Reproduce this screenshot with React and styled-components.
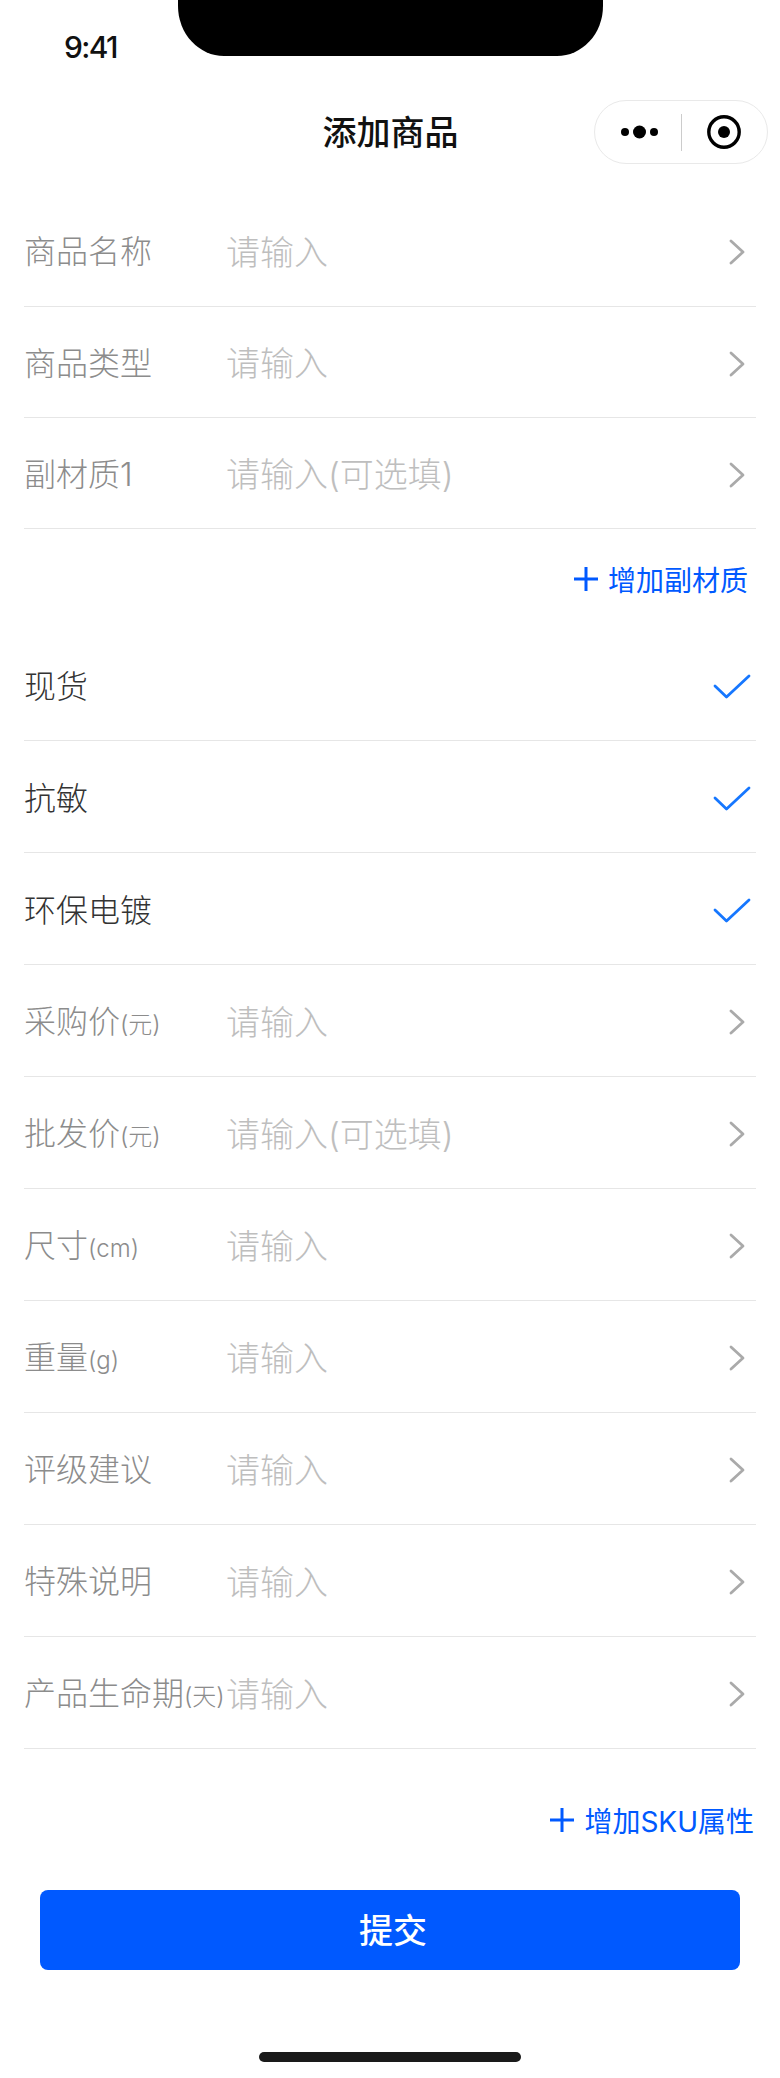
import styled, { createGlobalStyle } from "styled-components";

const GlobalStyle = createGlobalStyle`
  html, body {
    margin: 0;
    padding: 0;
    background: #fff;
  }
  body {
    font-family: "Inter", "Noto Sans CJK SC", sans-serif;
  }
`;

const Screen = styled("div")`
  position: relative;
  width: 780px;
  height: 2078px;
  overflow: hidden;
  background: #fff;
`;

const Notch = styled("div")`
  position: absolute;
  top: 0;
  left: 178px;
  width: 425px;
  height: 56px;
  background: #000;
  border-radius: 0 0 46px 46px / 0 0 50px 50px;
`;

const StatusBar = styled("div")`
  height: 100px;
  padding: 28px 0 0 64px;
  box-sizing: border-box;
  font-size: 30px;
  line-height: 38px;
  font-weight: 500;
  letter-spacing: -1.6px;
  color: #111;
`;

const NavBar = styled("div")`
  display: grid;
  grid-template-columns: 1fr auto 1fr;
  align-items: center;
  height: 64px;
  padding: 0 12px;
`;

const Title = styled("div")`
  grid-column: 2;
  margin: -3px 0 0 1px;
  font-family: "Noto Sans CJK SC", sans-serif;
  font-size: 34px;
  font-weight: 500;
  color: #111;
`;

const Capsule = styled("div")`
  justify-self: end;
  display: flex;
  align-items: center;
  box-sizing: border-box;
  width: 174px;
  height: 64px;
  padding-left: 26px;
  border: 1px solid #e9e9e9;
  border-radius: 32px;
`;

const CapsuleDivider = styled("span")`
  width: 1px;
  height: 37px;
  margin: 0 25px 0 23px;
  background: #ccc;
`;

const List = styled("div")`
  margin-top: 31px;
`;

const Row = styled("div")`
  display: flex;
  align-items: center;
  box-sizing: border-box;
  height: ${(props) => props.$height || 112}px;
  margin: 0 24px;
  border-bottom: 1px solid #e6e6e6;
`;

const Label = styled("div")`
  flex: none;
  width: 202px;
  margin-top: -3px;
  white-space: nowrap;
  font-size: 32px;
  font-weight: 300;
  color: #8c8c8c;
`;

const Unit = styled("span")`
  font-size: 24px;
`;

const Placeholder = styled("div")`
  flex: 1;
  margin-top: -1px;
  font-size: 34px;
  font-weight: 300;
  color: #bebebe;
`;

const CheckLabel = styled("div")`
  flex: 1;
  margin-top: -1px;
  font-size: 32px;
  font-weight: 300;
  color: #333;
`;

const ChevronIcon = styled("svg")`
  flex: none;
  width: 16px;
  height: 26px;
  margin: 3px 11px 0 0;
`;

const CheckIcon = styled("svg")`
  flex: none;
  width: 38px;
  height: 25px;
  margin: 3px 5px 0 0;
`;

const AddRow = styled("div")`
  display: flex;
  align-items: center;
  justify-content: flex-end;
  gap: 10px;
  box-sizing: border-box;
  height: ${(props) => props.$height}px;
  padding-right: ${(props) => props.$right}px;
  font-size: 28px;
  color: #0059ff;
`;

const SubmitButton = styled("button")`
  display: block;
  width: 700px;
  height: 80px;
  margin: 0 0 0 40px;
  padding: 0 0 3px 6px;
  border: 0;
  border-radius: 8px;
  background: #0059ff;
  color: #fff;
  font-family: "Noto Sans CJK SC", sans-serif;
  font-size: 34px;
  font-weight: 500;
`;

const HomeBar = styled("div")`
  width: 262px;
  height: 10px;
  margin: 82px 0 0 259px;
  border-radius: 5px;
  background: #1a1a1a;
`;

function Dots() {
  return (
    <svg width="37" height="14" viewBox="0 0 37 14">
      <circle cx="4" cy="7" r="4" fill="#000" />
      <circle cx="18.5" cy="7" r="6.5" fill="#000" />
      <circle cx="33" cy="7" r="4" fill="#000" />
    </svg>
  );
}

function Target() {
  return (
    <svg width="34" height="34" viewBox="0 0 34 34">
      <circle cx="17" cy="17" r="15.2" fill="none" stroke="#000" strokeWidth="3.4" />
      <circle cx="17" cy="17" r="6" fill="#000" />
    </svg>
  );
}

function Chevron() {
  return (
    <ChevronIcon viewBox="0 0 16 26">
      <path d="M2 2 L14 13 L2 24" fill="none" stroke="#aaa" strokeWidth="2.8" strokeLinecap="round" strokeLinejoin="round" />
    </ChevronIcon>
  );
}

function Check() {
  return (
    <CheckIcon viewBox="0 0 38 25">
      <path d="M2 12 L13.5 23 L36 2" fill="none" stroke="#1677ff" strokeWidth="2.8" strokeLinecap="round" strokeLinejoin="round" />
    </CheckIcon>
  );
}

function Plus() {
  return (
    <svg width="24" height="24" viewBox="0 0 24 24">
      <path d="M0 12 H24 M12 0 V24" fill="none" stroke="#0059ff" strokeWidth="3" />
    </svg>
  );
}

function InputRow({ label, unit, placeholder = "请输入", height }) {
  return (
    <Row $height={height}>
      <Label>
        {label}
        {unit && <Unit>{unit}</Unit>}
      </Label>
      <Placeholder>{placeholder}</Placeholder>
      <Chevron />
    </Row>
  );
}

function CheckRow({ label }) {
  return (
    <Row>
      <CheckLabel>{label}</CheckLabel>
      <Check />
    </Row>
  );
}

export default function App() {
  return (
    <Screen>
      <GlobalStyle />
      <Notch />
      <StatusBar>9:41</StatusBar>
      <NavBar>
        <Title>添加商品</Title>
        <Capsule>
          <Dots />
          <CapsuleDivider />
          <Target />
        </Capsule>
      </NavBar>
      <List>
        <InputRow label="商品名称" height={112} />
        <InputRow label="商品类型" height={111} />
        <InputRow label="副材质1" placeholder="请输入(可选填)" height={111} />
        <AddRow $height={100} $right={32}>
          <Plus />
          增加副材质
        </AddRow>
        <CheckRow label="现货" />
        <CheckRow label="抗敏" />
        <CheckRow label="环保电镀" />
        <InputRow label="采购价" unit="(元)" />
        <InputRow label="批发价" unit="(元)" placeholder="请输入(可选填)" />
        <InputRow label="尺寸" unit="(cm)" />
        <InputRow label="重量" unit="(g)" />
        <InputRow label="评级建议" />
        <InputRow label="特殊说明" />
        <InputRow label="产品生命期" unit="(天)" />
        <AddRow $height={141} $right={26}>
          <Plus />
          增加SKU属性
        </AddRow>
      </List>
      <SubmitButton>提交</SubmitButton>
      <HomeBar />
    </Screen>
  );
}
